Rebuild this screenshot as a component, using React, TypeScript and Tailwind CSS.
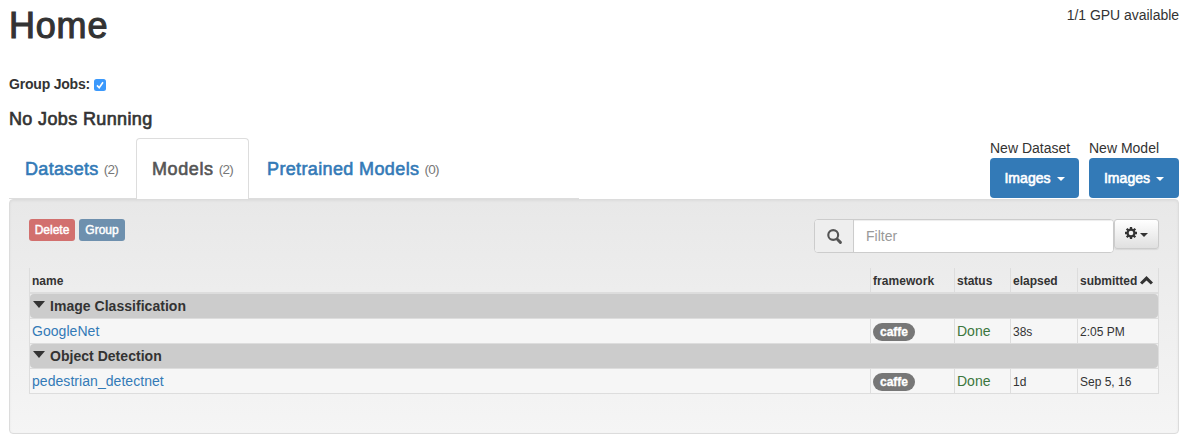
import type { ReactNode } from 'react';

const medium = '[-webkit-text-stroke:0.6px_currentColor]';

function Caret({ className = '' }: { className?: string }) {
  return (
    <svg className={`h-1 w-2 shrink-0 ${className}`} viewBox="0 0 8 4" fill="currentColor" aria-hidden="true">
      <path d="M0 0h8L4 4z" />
    </svg>
  );
}

function SearchIcon() {
  return (
    <svg className="size-[15px]" viewBox="0 0 14 14" fill="none" stroke="currentColor" aria-hidden="true">
      <circle cx="5.8" cy="5.6" r="4.6" strokeWidth="2" />
      <path d="M9.4 9.4l3.1 3.1" strokeWidth="2.7" strokeLinecap="round" />
    </svg>
  );
}

function GearIcon() {
  return (
    <svg className="size-3" viewBox="0 0 12 12" aria-hidden="true">
      <g stroke="currentColor" strokeWidth="2.3">
        <path d="M6 0v12M0 6h12M1.7 1.7l8.6 8.6M10.3 1.7l-8.6 8.6" />
      </g>
      <circle cx="6" cy="6" r="4.5" fill="currentColor" />
      <circle cx="6" cy="6" r="2.3" fill="#f3f3f3" />
    </svg>
  );
}

function ChevronUp() {
  return (
    <svg className="mb-0.5 h-[9px] w-[13px] shrink-0" viewBox="0 0 13 9" fill="currentColor" aria-hidden="true">
      <path d="M6.5 0L13 6.4 10.8 8.6 6.5 4.4 2.2 8.6 0 6.4z" />
    </svg>
  );
}

function Count({ n }: { n: number }) {
  return <span className="mt-0.5 ml-[5px] text-[13.5px] tracking-[-0.7px] text-[#777]">({n})</span>;
}

function NewMenu({ label, width }: { label: string; width: string }) {
  return (
    <div className={width}>
      <div className="h-5 whitespace-nowrap text-[14px] leading-5">{label}</div>
      <button className="flex h-10 w-full items-center justify-center rounded-[4px] bg-[#337ab7] text-[14px] text-white">
        <span className={`tracking-[0.05px] ${medium}`}>Images</span>
        <Caret className="ml-1.5 mt-0.5" />
      </button>
    </div>
  );
}

const columns = 'grid grid-cols-[841px_84px_56px_67px_82px]';

function Cell({ children, className = '' }: { children: ReactNode; className?: string }) {
  return (
    <div className={`flex items-center border-l border-[#ddd] pl-0.5 whitespace-nowrap last:border-r ${className}`}>
      {children}
    </div>
  );
}

function GroupRow({ title }: { title: string }) {
  return (
    <div className="h-[25px] border-x border-b border-[#ddd]">
      <div className="flex h-6 items-center rounded-[4px] bg-[#ccc] pl-[3px]">
        <svg className="mb-1 h-[7px] w-3" viewBox="0 0 12 7" fill="currentColor" aria-hidden="true">
          <path d="M0 0h12L6 7z" />
        </svg>
        <span className="ml-[5px] text-[14px] font-bold tracking-[0.03px]">{title}</span>
      </div>
    </div>
  );
}

function JobRow({ name, elapsed, submitted }: { name: string; elapsed: string; submitted: string }) {
  return (
    <div className={`h-[25px] border-b border-[#ddd] bg-[#f6f6f6] ${columns}`}>
      <Cell>
        <a className="text-[14px] tracking-[0.05px] text-[#337ab7]">{name}</a>
      </Cell>
      <Cell>
        <span className="mt-0.5 flex h-[18px] w-[42px] items-center justify-center rounded-full bg-[#777] text-[12px] font-bold text-white [-webkit-text-stroke:0.3px_currentColor]">
          caffe
        </span>
      </Cell>
      <Cell className="text-[14px] text-[#3c763d]">Done</Cell>
      <Cell className="pt-0.5 text-[12px]">{elapsed}</Cell>
      <Cell className="pt-0.5 text-[12px]">{submitted}</Cell>
    </div>
  );
}

export default function App() {
  return (
    <div className="h-[442px] w-[1187px] overflow-hidden bg-white pr-2 pl-[9px] font-['Liberation_Sans',Arial,sans-serif] text-[14px] leading-5 text-[#333]">
      <header className="flex h-[74px] items-start justify-between">
        <h1 className="mt-1.5 text-[36px] leading-10 tracking-[0.8px] [-webkit-text-stroke:1.1px_currentColor]">Home</h1>
        <div className="mt-[5px] tracking-[-0.03px]">1/1 GPU available</div>
      </header>

      <label className="flex h-5 items-center">
        <span className="font-bold tracking-[-0.2px]">Group Jobs:</span>
        <input type="checkbox" defaultChecked className="peer sr-only" />
        <svg className="mt-0.5 ml-1 size-3" viewBox="0 0 12 12" aria-hidden="true">
          <rect width="12" height="12" rx="2.5" fill="#3b99fc" />
          <path d="M3 6.4l2.2 2.4L9 3.2" fill="none" stroke="#fff" strokeWidth="1.6" />
        </svg>
      </label>

      <h4 className="mt-[15px] h-5 text-[18px] leading-5 tracking-[0.37px] [-webkit-text-stroke:0.65px_currentColor]">No Jobs Running</h4>

      <div className="flex h-[70px] items-end justify-between">
        <nav className="flex h-[61px] w-[570px] border-b border-[#ddd] text-[18px]">
          <a className="flex h-[61px] w-[127px] items-center pt-px pl-4 text-[#337ab7]">
            <span className={`tracking-[0.33px] ${medium}`}>Datasets</span>
            <Count n={2} />
          </a>
          <a className="flex h-[61px] w-[113px] items-center rounded-t-[4px] border border-b-0 border-[#ddd] bg-white pl-[15px] text-[#555]">
            <span className={`tracking-[0.6px] ${medium}`}>Models</span>
            <Count n={2} />
          </a>
          <a className="flex h-[61px] items-center pt-px pl-[18px] text-[#337ab7]">
            <span className={`tracking-[0.37px] ${medium}`}>Pretrained Models</span>
            <Count n={0} />
          </a>
        </nav>
        <div className="mb-px flex gap-2.5">
          <NewMenu label="New Dataset" width="w-[89px]" />
          <NewMenu label="New Model" width="w-[90px]" />
        </div>
      </div>

      <main className="h-[235px] rounded-[4px] border border-[#dcdcdc] bg-linear-to-b from-[#e8e8e8] to-[#f5f5f5] px-[19px] pt-[19px] shadow-[inset_0_1px_3px_rgba(0,0,0,0.05)]">
        <div className="flex h-[49px] items-start justify-between">
          <div className="flex gap-1 text-[12px] text-white">
            <button className="h-[22px] w-[46px] rounded-[3px] bg-[#d2706e] [-webkit-text-stroke:0.45px_currentColor]">Delete</button>
            <button className="h-[22px] w-[46px] rounded-[3px] bg-[#6e90ae] [-webkit-text-stroke:0.45px_currentColor]">Group</button>
          </div>
          <div className="flex items-start">
            <div className="flex h-[34px] w-[300px] overflow-hidden rounded-[4px] border border-[#ccc] bg-white">
              <div className="flex w-[39px] shrink-0 items-center justify-center border-r border-[#ccc] bg-[#eee] text-[#555]">
                <SearchIcon />
              </div>
              <input
                placeholder="Filter"
                className="w-full min-w-0 bg-white px-3 text-[14px] shadow-[inset_0_1px_1px_rgba(0,0,0,0.075)] outline-none placeholder:text-[#999]"
              />
            </div>
            <button className="flex h-[30px] w-[45px] items-center rounded-[3px] border border-[#ccc] bg-linear-to-b from-white to-[#e0e0e0] pl-2.5 shadow-[0_1px_1px_rgba(0,0,0,0.08)]">
              <span className="mb-0.5"><GearIcon /></span>
              <Caret className="mt-0.5 ml-[3px]" />
            </button>
          </div>
        </div>

        <div className="w-[1130px]">
          <div className={`h-[26px] border-b-2 border-[#ddd] text-[12px] font-bold ${columns}`}>
            <Cell className="pt-0.5">name</Cell>
            <Cell className="pt-0.5 tracking-[0.05px]">framework</Cell>
            <Cell className="pt-0.5">status</Cell>
            <Cell className="pt-0.5">elapsed</Cell>
            <Cell className="gap-[3px] pt-0.5">
              submitted <ChevronUp />
            </Cell>
          </div>
          <GroupRow title="Image Classification" />
          <JobRow name="GoogleNet" elapsed="38s" submitted="2:05 PM" />
          <GroupRow title="Object Detection" />
          <JobRow name="pedestrian_detectnet" elapsed="1d" submitted="Sep 5, 16" />
        </div>
      </main>
    </div>
  );
}
